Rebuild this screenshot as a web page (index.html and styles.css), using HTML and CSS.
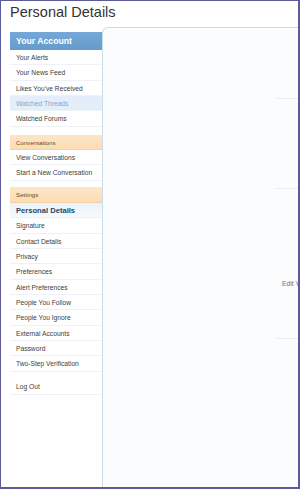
FILE: index.html
```html
<!DOCTYPE html>
<html>
<head>
<meta charset="utf-8">
<link rel="stylesheet" href="styles.css">
</head>
<body>
<div class="frame">
  <h1 class="title">Personal Details</h1>
  <div class="layout">
    <nav class="sidebar">
      <div class="block">
        <div class="head head-blue">Your Account</div>
        <div class="item">Your Alerts</div>
        <div class="item">Your News Feed</div>
        <div class="item">Likes You've Received</div>
        <div class="item item-hover">Watched Threads</div>
        <div class="item">Watched Forums</div>
      </div>
      <div class="block block-conv">
        <div class="head head-orange">Conversations</div>
        <div class="item">View Conversations</div>
        <div class="item">Start a New Conversation</div>
      </div>
      <div class="block block-settings">
        <div class="head head-orange tall">Settings</div>
        <div class="item item-current">Personal Details</div>
        <div class="item">Signature</div>
        <div class="item">Contact Details</div>
        <div class="item">Privacy</div>
        <div class="item">Preferences</div>
        <div class="item">Alert Preferences</div>
        <div class="item">People You Follow</div>
        <div class="item">People You Ignore</div>
        <div class="item">External Accounts</div>
        <div class="item">Password</div>
        <div class="item">Two-Step Verification</div>
      </div>
      <div class="block block-logout">
        <div class="item">Log Out</div>
      </div>
    </nav>
    <main class="main">
      <div class="form">
        <div class="sec sec1"></div>
        <div class="sec sec2"></div>
        <div class="sec sec3"><span class="edit">Edit Your Details</span></div>
      </div>
    </main>
  </div>
</div>
</body>
</html>
```

FILE: styles.css
```css
html, body {
  margin: 0;
  padding: 0;
  background: #ffffff;
}
.frame {
  box-sizing: border-box;
  width: 300px;
  height: 489px;
  border-style: solid;
  border-color: #5b5b9b;
  border-width: 1px 2px 2px 1px;
  overflow: hidden;
  display: flex;
  flex-direction: column;
  font-family: "Liberation Sans", Arial, sans-serif;
}
.title {
  margin: 0;
  padding: 2px 0 0 9px;
  height: 26px;
  box-sizing: border-box;
  font-size: 14.5px;
  font-weight: normal;
  color: #333333;
  line-height: 18px;
}
.layout {
  display: flex;
  flex: 1;
  padding-left: 9px;
}
.sidebar {
  width: 92px;
  flex: none;
  padding-top: 5px;
  display: flex;
  flex-direction: column;
}
.block {
  display: flex;
  flex-direction: column;
}
.block-conv { margin-top: 8.4px; }
.block-settings { margin-top: 6.3px; }
.block-logout { margin-top: 7.7px; }
.head {
  padding-left: 6px;
  box-sizing: border-box;
}
.head-blue {
  height: 18px;
  line-height: 18px;
  background: linear-gradient(#74a8d8, #659bcd);
  color: #ffffff;
  font-weight: bold;
  font-size: 8.7px;
}
.head-orange {
  height: 15px;
  line-height: 15px;
  background: linear-gradient(#fde6c6, #fcdcb2);
  color: #6b4b2e;
  font-size: 6.2px;
  border-bottom: 1px solid #f2d2a8;
}
.head-orange.tall {
  height: 16px;
  line-height: 16px;
}
.item {
  height: 15.33px;
  line-height: 16px;
  box-sizing: border-box;
  padding-left: 6px;
  border-bottom: 1px solid #eef1f5;
  font-size: 6.7px;
  color: #3d3d3d;
  white-space: nowrap;
}
.item-hover {
  background: #e3eefa;
  color: #8aa7c4;
}
.item-current {
  background: linear-gradient(#eaf3fb, #f6fafd);
  color: #25476a;
  font-weight: bold;
  font-size: 7.6px;
}
.main {
  flex: 1;
  background: #fbfcfe;
  border-left: 1px solid #c9dde8;
  border-top: 1px solid #c9dde8;
  border-top-left-radius: 6px;
  overflow: hidden;
}
.form {
  padding-left: 173px;
}
.sec {
  box-sizing: border-box;
  border-bottom: 1px solid #e9edf3;
  white-space: nowrap;
}
.sec1 { height: 71px; }
.sec2 { height: 90px; }
.sec3 {
  height: 150px;
  padding: 83px 0 0 6px;
}
.edit {
  font-size: 6.7px;
  color: #5a6f8c;
}
```
